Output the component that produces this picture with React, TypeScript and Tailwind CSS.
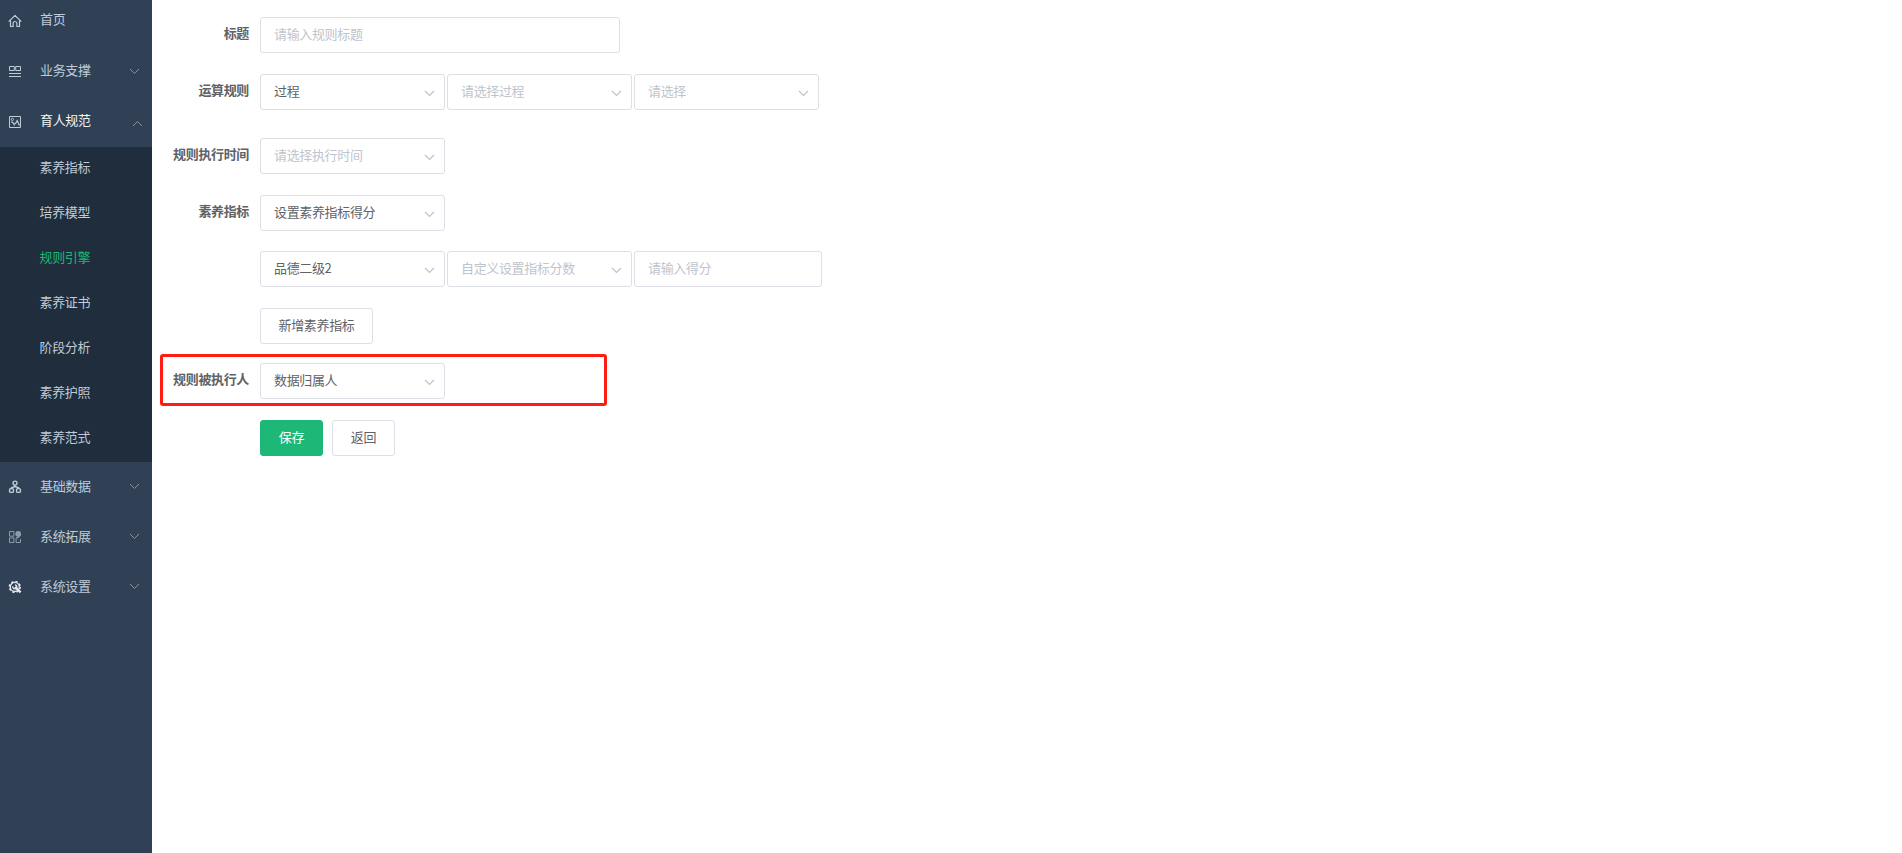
import { ReactNode } from "react";
import clsx from "clsx";

interface MenuItem {
  label: string;
  icon: ReactNode;
  open?: boolean;
  leaf?: boolean;
  height: string;
  children?: string[];
}

const HomeIcon = () => (
  <svg width="14" height="14" viewBox="0 0 14 14" fill="none" stroke="currentColor" strokeWidth="1.2">
    <path d="M0.7 7.6 7 1.3l6.3 6.3M2.5 6.4v6.1h2.6V9.4a1.9 1.9 0 0 1 3.8 0v3.1h2.6V6.4" strokeLinejoin="round" />
  </svg>
);

const SupportIcon = () => (
  <svg width="14" height="14" viewBox="0 0 14 14" fill="none" stroke="currentColor">
    <path d="M1.5 1.5h4.8v4H1.5zM7.7 1.5h4.8v4H7.7z" />
    <path d="M1 8.5h12M1 11.5h12" strokeWidth="1.2" />
  </svg>
);

const PictureIcon = () => (
  <svg width="14" height="14" viewBox="0 0 14 14" fill="none" stroke="currentColor">
    <path d="M1.5 1.5h11v11h-11z" />
    <circle cx="4.4" cy="4.4" r="1.1" />
    <path d="M3.2 7.2c1.6-.4 2.6.8 3.4 3.2M7.2 9l2-3.4 2.2 5" strokeWidth="1.3" />
  </svg>
);

const DataIcon = () => (
  <svg width="14" height="14" viewBox="0 0 14 14" fill="none" stroke="currentColor" strokeWidth="1.4">
    <circle cx="7" cy="3.1" r="2" />
    <path d="M7 5.1v1.6M3.4 9V7.8L7 6.5l3.6 1.3V9" />
    <rect x="1.6" y="8.6" width="3.8" height="3.8" rx="1" />
    <rect x="8.6" y="8.6" width="3.8" height="3.8" rx="1" />
  </svg>
);

const ExtendIcon = () => (
  <svg width="14" height="14" viewBox="0 0 14 14" fill="none" stroke="currentColor" opacity="0.65">
    <path d="M1.5 1.5h4.4v4.7H1.5zM1.5 7.9h4.4v4.6H1.5zM12.5 9v3.5H8.1V7.9h2" />
    <circle cx="10.2" cy="3.8" r="2.9" fill="currentColor" stroke="none" />
    <path d="M8.6 7.4h1.6l2.4-2.6" strokeWidth="1.3" />
  </svg>
);

const SettingIcon = () => (
  <svg width="14" height="14" viewBox="0 0 14 14" fill="none" stroke="#e4e9ef">
    <circle cx="6.8" cy="6.9" r="5.4" strokeWidth="1.5" strokeDasharray="2.24 2" />
    <circle cx="6.8" cy="6.9" r="4.5" strokeWidth="1.3" />
    <path d="M7 7l5.6 5.4" strokeWidth="2.4" />
    <path d="M4.8 6.4A2 2 0 1 0 7 4.9" strokeWidth="1.4" />
  </svg>
);

const SUB_MENU = ["素养指标", "培养模型", "规则引擎", "素养证书", "阶段分析", "素养护照", "素养范式"];

const MENU: MenuItem[] = [
  { label: "首页", icon: <HomeIcon />, leaf: true, height: "h-[46px] pb-[6px]" },
  { label: "业务支撑", icon: <SupportIcon />, height: "h-[50px]" },
  { label: "育人规范", icon: <PictureIcon />, open: true, height: "h-[51px] pb-px", children: SUB_MENU },
  { label: "基础数据", icon: <DataIcon />, height: "h-[50px] pb-px" },
  { label: "系统拓展", icon: <ExtendIcon />, height: "h-[50px] pb-px" },
  { label: "系统设置", icon: <SettingIcon />, height: "h-[50px] pb-px" },
];

function Chevron({ className }: { className?: string }) {
  return (
    <svg width="11" height="7" viewBox="0 0 11 7" fill="none" stroke="currentColor" className={className}>
      <path d="M1 1l4.5 4.4L10 1" />
    </svg>
  );
}

function Sidebar({ active }: { active: string }) {
  return (
    <aside className="w-[152px] shrink-0 bg-[#304156] text-[#bfcbd9]">
      {MENU.map((item) => (
        <div key={item.label}>
          <div className={clsx("flex items-center pl-2", item.height, item.open && "text-[#f4f4f5]")}>
            <span className="mt-px w-8 shrink-0 text-[#bfcbd9]">{item.icon}</span>
            <span className="pb-[2px]">{item.label}</span>
            {!item.leaf && (
              <Chevron
                className={clsx(
                  "ml-auto text-[#909399]",
                  item.open ? "mr-[9px] mt-[4px] rotate-180" : "mr-3"
                )}
              />
            )}
          </div>
          {item.children && (
            <ul className="bg-[#1f2d3d]">
              {item.children.map((child) => (
                <li
                  key={child}
                  className={clsx(
                    "flex h-[45px] items-center pb-[5px] pl-[39.5px]",
                    child === active ? "text-[#1db877]" : "text-[#bfcbd9]"
                  )}
                >
                  {child}
                </li>
              ))}
            </ul>
          )}
        </div>
      ))}
    </aside>
  );
}

function Select({ value, placeholder }: { value?: string; placeholder?: string }) {
  return (
    <div className="flex h-9 w-[185px] items-center justify-between rounded-[3px] border border-[#dcdfe6] bg-white pl-[13px] pr-[9px]">
      <span className={clsx("pb-[2px]", value ? "text-[#606266]" : "text-[#c0c4cc]")}>{value ?? placeholder}</span>
      <Chevron className="mt-[3px] stroke-[1.3] text-[#c0c4cc]" />
    </div>
  );
}

function Input({ placeholder, className }: { placeholder: string; className: string }) {
  return (
    <input
      placeholder={placeholder}
      className={clsx(
        "h-9 rounded-[3px] border border-[#dcdfe6] bg-white px-[13px] pb-[3px] tracking-[-0.35px] outline-none placeholder:text-[#c0c4cc]",
        className
      )}
    />
  );
}

function Button({ children, primary, className }: { children: ReactNode; primary?: boolean; className: string }) {
  return (
    <button
      type="button"
      className={clsx(
        "h-9 rounded-[3px] border pb-[2px] tracking-[-0.35px]",
        primary ? "border-[#1db877] bg-[#1db877] text-white" : "border-[#dcdfe6] bg-white text-[#606266]",
        className
      )}
    >
      {children}
    </button>
  );
}

function FormRow({ label, className, children }: { label?: string; className?: string; children: ReactNode }) {
  return (
    <div className={clsx("flex h-9 items-center", className)}>
      <label className="w-[97px] shrink-0 pb-[4px] text-right font-bold text-[#606266]">{label}</label>
      <div className="ml-[11px] flex gap-[2px]">{children}</div>
    </div>
  );
}

export default function App() {
  return (
    <div className="flex h-screen overflow-hidden bg-white font-['Noto_Sans_CJK_SC',sans-serif] text-[13px] leading-5 tracking-[-0.35px]">
      <Sidebar active="规则引擎" />
      <main className="flex-1 pt-[17px]">
        <FormRow label="标题">
          <Input placeholder="请输入规则标题" className="w-[360px]" />
        </FormRow>
        <FormRow label="运算规则" className="mt-[21px]">
          <Select value="过程" />
          <Select placeholder="请选择过程" />
          <Select placeholder="请选择" />
        </FormRow>
        <FormRow label="规则执行时间" className="mt-7">
          <Select placeholder="请选择执行时间" />
        </FormRow>
        <FormRow label="素养指标" className="mt-[21px]">
          <Select value="设置素养指标得分" />
        </FormRow>
        <FormRow className="mt-5">
          <Select value="品德二级2" />
          <Select placeholder="自定义设置指标分数" />
          <Input placeholder="请输入得分" className="w-[188px]" />
        </FormRow>
        <FormRow className="mt-[21px]">
          <Button className="w-[113px]">新增素养指标</Button>
        </FormRow>
        <div className="ml-2 mt-[10px] h-[52px] w-[447px] rounded-[3px] border-3 border-[#ff1d12] pt-[6px]">
          <FormRow label="规则被执行人" className="-ml-[11px]">
            <Select value="数据归属人" />
          </FormRow>
        </div>
        <FormRow className="mt-[14px]">
          <div className="flex gap-[9px]">
            <Button primary className="w-[63px]">保存</Button>
            <Button className="w-[63px]">返回</Button>
          </div>
        </FormRow>
      </main>
    </div>
  );
}
